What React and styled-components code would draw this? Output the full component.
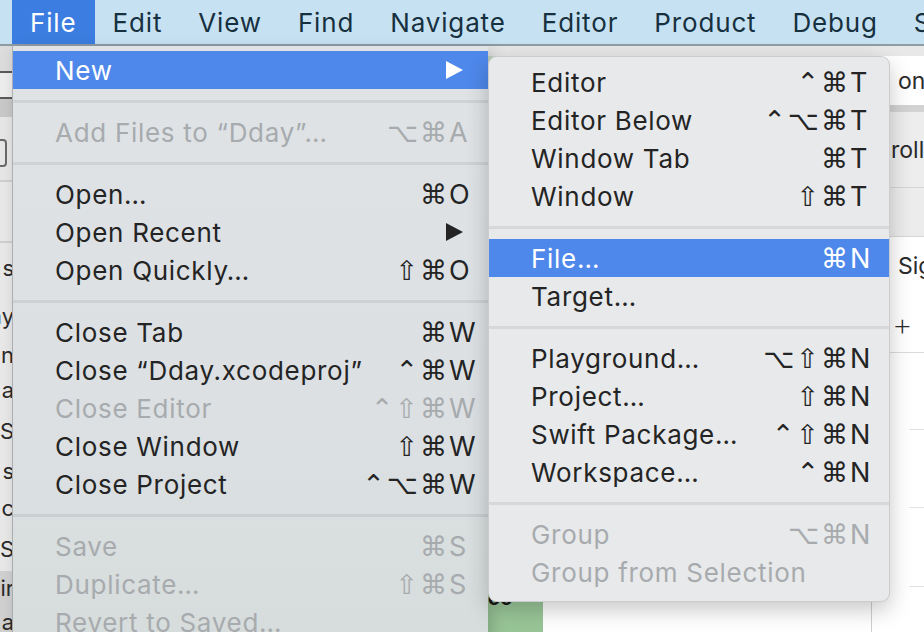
import React from "react";
import styled, { createGlobalStyle } from "styled-components";

const GlobalStyle = createGlobalStyle`
  html, body {
    margin: 0;
    padding: 0;
    background: #ffffff;
  }
  body {
    font-family: Inter, "Noto Sans", "DejaVu Sans", sans-serif;
    -webkit-font-smoothing: antialiased;
  }
`;

const barItems = ["File", "Edit", "View", "Find", "Navigate", "Editor", "Product", "Debug", "Source"];

const fileMenu = [
  { label: "New", arrow: true, active: true },
  { sep: true },
  { label: "Add Files to \u201cDday\u201d\u2026", mods: "\u2325\u2318", key: "A", disabled: true },
  { sep: true },
  { label: "Open\u2026", mods: "\u2318", key: "O" },
  { label: "Open Recent", arrow: true },
  { label: "Open Quickly\u2026", mods: "\u21e7\u2318", key: "O" },
  { sep: true },
  { label: "Close Tab", mods: "\u2318", key: "W" },
  { label: "Close \u201cDday.xcodeproj\u201d", mods: "\u2303\u2318", key: "W" },
  { label: "Close Editor", mods: "\u2303\u21e7\u2318", key: "W", disabled: true },
  { label: "Close Window", mods: "\u21e7\u2318", key: "W" },
  { label: "Close Project", mods: "\u2303\u2325\u2318", key: "W" },
  { sep: true },
  { label: "Save", mods: "\u2318", key: "S", disabled: true },
  { label: "Duplicate\u2026", mods: "\u21e7\u2318", key: "S", disabled: true },
  { label: "Revert to Saved\u2026", disabled: true },
  { label: "Unlock\u2026", disabled: true },
];

const newMenu = [
  { label: "Editor", mods: "\u2303\u2318", key: "T" },
  { label: "Editor Below", mods: "\u2303\u2325\u2318", key: "T" },
  { label: "Window Tab", mods: "\u2318", key: "T" },
  { label: "Window", mods: "\u21e7\u2318", key: "T" },
  { sep: true },
  { label: "File\u2026", mods: "\u2318", key: "N", active: true },
  { label: "Target\u2026" },
  { sep: true },
  { label: "Playground\u2026", mods: "\u2325\u21e7\u2318", key: "N" },
  { label: "Project\u2026", mods: "\u21e7\u2318", key: "N" },
  { label: "Swift Package\u2026", mods: "\u2303\u21e7\u2318", key: "N" },
  { label: "Workspace\u2026", mods: "\u2303\u2318", key: "N" },
  { sep: true },
  { label: "Group", mods: "\u2325\u2318", key: "N", disabled: true },
  { label: "Group from Selection", disabled: true },
];

const navFragments = [
  { text: "s", h: 50 },
  { text: "ay", h: 46 },
  { text: "n", h: 32 },
  { text: "a", h: 38 },
  { text: ".S", h: 44 },
  { text: "s", h: 36 },
  { text: "c", h: 38 },
  { text: ".S", h: 44 },
  { text: "ir", h: 34, selected: true },
  { text: "a", h: 34, selected: true },
];

function Arrow() {
  return (
    <ArrowSvg width="17" height="18" viewBox="0 0 17 18">
      <polygon points="0,0 17,9 0,18" fill="currentColor" />
    </ArrowSvg>
  );
}

function MenuList({ items }) {
  return items.map((item, index) => {
    if (item.sep) return <Separator key={index} />;
    return (
      <Item key={index} $active={item.active} $disabled={item.disabled}>
        <Label>{item.label}</Label>
        {item.mods && <Mods>{item.mods}</Mods>}
        <KeyCell>
          {item.key}
          {item.arrow && <Arrow />}
        </KeyCell>
      </Item>
    );
  });
}

function App() {
  return (
    <Screen>
      <GlobalStyle />
      <MenuBar>
        {barItems.map((text, index) => (
          <BarItem key={text} $open={index === 0}>
            {text}
          </BarItem>
        ))}
      </MenuBar>

      <Workspace>
        <LeftStrip>
          <StripBand $h={25} $bg="#dcdcdc" $line="#5a5a5a" />
          <StripBand $h={24} $bg="#ededed" $line="#5a5a5a" />
          <StripBand $h={18} $bg="#c8c8c8" />
          <StripBand $h={63} $bg="#e6e6e6" $line="#cfcfcf">
            <FieldEdge />
          </StripBand>
          <StripBand $h={59} $bg="#e8e8e8" $line="#cfcfcf" />
          {navFragments.map((f, index) => (
            <Fragment key={index} $h={f.h} $selected={f.selected}>
              <span>{f.text}</span>
            </Fragment>
          ))}
        </LeftStrip>

        <Center>
          <TitleStrip />
          <CenterBody>
            <NavPane />
            <Canvas>
              <CanvasMark>oo</CanvasMark>
            </Canvas>
            <EditorPane />
          </CenterBody>
        </Center>

        <Inspector>
          <PanelRow $h={10} $bg="#e8e8e8" />
          <PanelRow $h={49} $bg="#ffffff" $pad={26}>
            on
          </PanelRow>
          <PanelRow $h={7} $bg="#d3d3d3" />
          <PanelRow $h={76} $bg="#ededed" $pad={19} $line="#d6d6d6">
            roller
          </PanelRow>
          <PanelRow $h={49} $bg="#ececec" $line="#d6d6d6" />
          <PanelRow $h={58} $bg="#ffffff" $pad={26}>
            Signing
          </PanelRow>
          <PanelRow $h={58} $bg="#ffffff" $pad={20} $line="#dcdcdc" $light>
            +
          </PanelRow>
          <PanelRow $h={77} $bg="#ffffff" $line="#e2e2e2" $indent={37} />
          <PanelRow $h={78} $bg="#ffffff" $line="#e2e2e2" $indent={37} />
          <PanelRow $h={79} $bg="#ffffff" $line="#e2e2e2" $indent={37} />
          <PanelRow $h={45} $bg="#ffffff" />
        </Inspector>
      </Workspace>

      <FileMenu>
        <MenuList items={fileMenu} />
      </FileMenu>

      <SubMenu>
        <MenuList items={newMenu} />
      </SubMenu>
    </Screen>
  );
}
export default App;

const Screen = styled.div`
  position: relative;
  width: 924px;
  height: 632px;
  overflow: hidden;
  background: #ececec;
`;

// menu bar
const MenuBar = styled.div`
  display: flex;
  height: 44px;
  padding-left: 12px;
  background: #c6e2f2;
  border-bottom: 2px solid #8f9ca4;
  white-space: nowrap;
`;

const BarItem = styled.div`
  display: flex;
  align-items: center;
  padding: 0 18px;
  font-size: 26px;
  letter-spacing: 0.85px;
  color: ${(p) => (p.$open ? "#ffffff" : "#17303f")};
  background: ${(p) => (p.$open ? "#3b7de0" : "transparent")};
`;

// background window
const Workspace = styled.div`
  display: flex;
  height: 586px;
`;

const LeftStrip = styled.div`
  width: 12px;
  flex-shrink: 0;
  display: flex;
  flex-direction: column;
  background: #e8e8e8;
  overflow: hidden;
`;

const StripBand = styled.div`
  position: relative;
  height: ${(p) => p.$h}px;
  flex-shrink: 0;
  background: ${(p) => p.$bg};
  border-bottom: ${(p) => (p.$line ? `2px solid ${p.$line}` : "none")};
`;

const FieldEdge = styled.div`
  position: absolute;
  right: 5px;
  top: 22px;
  width: 20px;
  height: 24px;
  border: 2px solid #6a6a6a;
  border-radius: 4px;
`;

const Fragment = styled.div`
  height: ${(p) => p.$h}px;
  flex-shrink: 0;
  display: flex;
  align-items: center;
  justify-content: flex-end;
  overflow: hidden;
  white-space: nowrap;
  font-size: 22px;
  color: #2a2a2a;
  background: ${(p) => (p.$selected ? "#d0d0d0" : "transparent")};

  span {
    margin-right: -2px;
  }
`;

const Center = styled.div`
  flex: 1;
  display: flex;
  flex-direction: column;
`;

const TitleStrip = styled.div`
  height: 10px;
  background: #e6e6e6;
`;

const CenterBody = styled.div`
  flex: 1;
  display: flex;
`;

const NavPane = styled.div`
  width: 476px;
  background: #e4e4e4;
`;

const Canvas = styled.div`
  width: 55px;
  display: flex;
  align-items: flex-end;
  background: linear-gradient(180deg, #c9dcc8 0%, #a7cfa5 85%, #97c596 100%);
`;

const CanvasMark = styled.span`
  font-size: 20px;
  font-weight: 700;
  color: #1a1a1a;
  margin: 0 0 24px 0;
  line-height: 1;
`;

const EditorPane = styled.div`
  flex: 1;
  background: #ffffff;
  border-right: 1px solid #cfcfcf;
`;

const Inspector = styled.div`
  width: 52px;
  flex-shrink: 0;
  display: flex;
  flex-direction: column;
  background: #ffffff;
  overflow: hidden;
`;

const PanelRow = styled.div`
  position: relative;
  height: ${(p) => p.$h}px;
  flex-shrink: 0;
  display: flex;
  align-items: center;
  padding-left: ${(p) => p.$pad || 0}px;
  background: ${(p) => p.$bg};
  font-size: ${(p) => (p.$light ? "32px" : "23px")};
  font-weight: ${(p) => (p.$light ? 200 : 400)};
  color: #2b2b2b;
  white-space: nowrap;

  &::after {
    content: "";
    position: absolute;
    left: ${(p) => p.$indent || 0}px;
    right: 0;
    bottom: 0;
    height: 1px;
    background: ${(p) => p.$line || "transparent"};
  }
`;

// menus
const FileMenu = styled.div`
  position: absolute;
  left: 12px;
  top: 46px;
  width: 476px;
  height: 620px;
  padding-top: 5px;
  box-sizing: border-box;
  background: linear-gradient(180deg, #dfe3e6 0%, #dce0e3 60%, #d6dcdb 100%);
  border-left: 1px solid rgba(0, 0, 0, 0.22);
  box-shadow: 4px 4px 14px rgba(0, 0, 0, 0.18);
`;

const SubMenu = styled.div`
  position: absolute;
  left: 488px;
  top: 56px;
  width: 402px;
  padding: 6px 0 10px;
  box-sizing: border-box;
  background: #e7e9eb;
  border: 1px solid rgba(0, 0, 0, 0.12);
  border-radius: 9px;
  box-shadow: 0 8px 22px rgba(0, 0, 0, 0.22);
  overflow: hidden;
`;

const Item = styled.div`
  display: flex;
  align-items: center;
  height: 38px;
  padding: 0 8px 0 42px;
  font-size: 26px;
  letter-spacing: 0.7px;
  white-space: nowrap;
  color: ${(p) => (p.$active ? "#ffffff" : p.$disabled ? "#a7abae" : "#242424")};
  background: ${(p) => (p.$active ? "#4e88ea" : "transparent")};
`;

const Label = styled.span`
  flex: 1;
`;

const Mods = styled.span`
  font-family: "DejaVu Sans", Inter, sans-serif;
  font-size: 27px;
  letter-spacing: 2px;
  margin-right: 0;
`;

const KeyCell = styled.span`
  width: 31px;
  display: flex;
  align-items: center;
  font-size: 27px;
  letter-spacing: 0;
`;

const ArrowSvg = styled.svg`
  margin-left: -3px;
`;

const Separator = styled.div`
  height: 24px;
  display: flex;
  align-items: center;

  &::before {
    content: "";
    flex: 1;
    height: 3px;
    background: rgba(0, 0, 0, 0.07);
  }
`;
